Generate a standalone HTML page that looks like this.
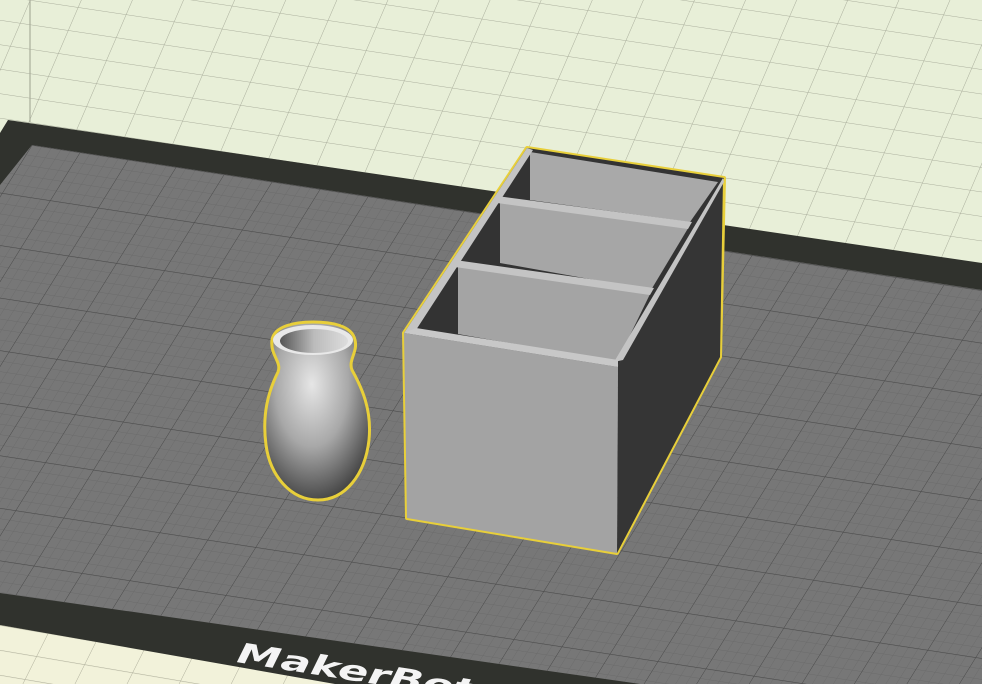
<!DOCTYPE html>
<html><head><style>html,body{margin:0;padding:0;background:#e8eed8;overflow:hidden;width:982px;height:684px}svg{display:block;position:absolute;left:0;top:0}</style></head>
<body>
<svg width="982" height="684" viewBox="0 0 982 684" xmlns="http://www.w3.org/2000/svg">
<defs>
<pattern id="bg" width="48" height="23" patternUnits="userSpaceOnUse" patternTransform="matrix(1,0.15,-0.43,1,30,0)">
<rect width="48" height="23" fill="#e8efd8"/>
<path d="M0 0H48M0 0V23" stroke="#a9ad9b" stroke-width="1" fill="none"/>
</pattern>
<pattern id="bg2" width="48" height="23" patternUnits="userSpaceOnUse" patternTransform="matrix(1,0.17,-0.5,1,0,625)">
<rect width="48" height="23" fill="#f2f2da"/>
<path d="M0 0H48M0 0V23" stroke="#b0b09c" stroke-width="1" fill="none"/>
</pattern>
<pattern id="fine" width="9.6" height="9.6" patternUnits="userSpaceOnUse" patternTransform="matrix(1,0.153,-0.62,1,32,145)">
<rect width="9.6" height="9.6" fill="#777"/>
<path d="M0 0H9.6M0 0V9.6" stroke="#6a6a6a" stroke-width="0.8" fill="none"/>
</pattern>
<pattern id="major" width="48" height="48" patternUnits="userSpaceOnUse" patternTransform="matrix(1,0.153,-0.62,1,32,145)">
<path d="M0 0H48M0 0V48" stroke="#4a4a4a" stroke-width="1" fill="none"/>
</pattern>
<radialGradient id="vg" cx="0.45" cy="0.35" r="0.7">
<stop offset="0" stop-color="#e6e6e6"/><stop offset="0.5" stop-color="#a8a8a8"/><stop offset="1" stop-color="#3a3a3a"/>
</radialGradient>
<linearGradient id="vin" x1="0" y1="0" x2="1" y2="0">
<stop offset="0" stop-color="#555"/><stop offset="0.5" stop-color="#bbb"/><stop offset="1" stop-color="#ddd"/>
</linearGradient>
<clipPath id="c"><rect width="982" height="684"/></clipPath>
</defs>
<g clip-path="url(#c)">
<rect width="982" height="684" fill="url(#bg)"/>
<line x1="30" y1="0" x2="30" y2="122" stroke="#a9ad9b" stroke-width="1.2"/>
<polygon points="8,120 982,263 982,684 0,684 0,133" fill="#30322d"/>
<polygon points="0,625 335,684 0,684" fill="url(#bg2)"/>
<polygon points="32,145 982,290 982,684 640,684 0,593 0,185" fill="url(#fine)"/>
<polygon points="32,145 982,290 982,684 640,684 0,593 0,185" fill="url(#major)"/>
<text x="236" y="662" font-family="DejaVu Sans, sans-serif" font-style="italic" font-weight="bold" font-size="28" fill="#f4f4f4" transform="rotate(9 236 662)" textLength="240" lengthAdjust="spacingAndGlyphs">MakerBot</text>
<polygon points="404,333 527,148 724,178 720,357 617,553 407,518" fill="none" stroke="#e8cf3a" stroke-width="4" stroke-linejoin="round"/>
<polygon points="404,333 527,148 724,178 618,366" fill="#333"/>
<polygon points="530,152 718,182 690,222 530,200" fill="#a9a9a9"/>
<polygon points="500,198 690,225 651,290 500,263" fill="#a6a6a6"/>
<polygon points="497,196 692,222 688,229 497,203" fill="#c4c4c4"/>
<polygon points="458,262 651,292 617,362 458,334" fill="#a4a4a4"/>
<polygon points="455,260 654,288 650,295 455,267" fill="#c4c4c4"/>
<polygon points="618,366 723,178 720,357 617,553" fill="#353535"/>
<polygon points="723,178 724,182 623,360 614,362" fill="#c4c4c4"/>
<polygon points="404,333 527,148 533,150 416,330" fill="#c4c4c4"/>
<polygon points="404,333 416,328 618,360 618,367" fill="#c8c8c8"/>
<polygon points="404,333 618,367 617,553 407,518" fill="#a3a3a3"/>
<path d="M272,340 C270,355 282,362 278,372 C268,392 262,415 266,445 C270,475 290,500 318,500 C345,500 365,475 369,440 C372,410 362,388 352,370 C348,360 358,352 355,340 C352,325 330,322 313,322 C295,322 274,326 272,340 Z" fill="url(#vg)" stroke="#e8cf3a" stroke-width="3"/>
<ellipse cx="313" cy="340" rx="40" ry="15" fill="#e8e8e8"/>
<ellipse cx="314" cy="341" rx="34" ry="12" fill="url(#vin)"/>
</g>
</svg>
</body></html>
